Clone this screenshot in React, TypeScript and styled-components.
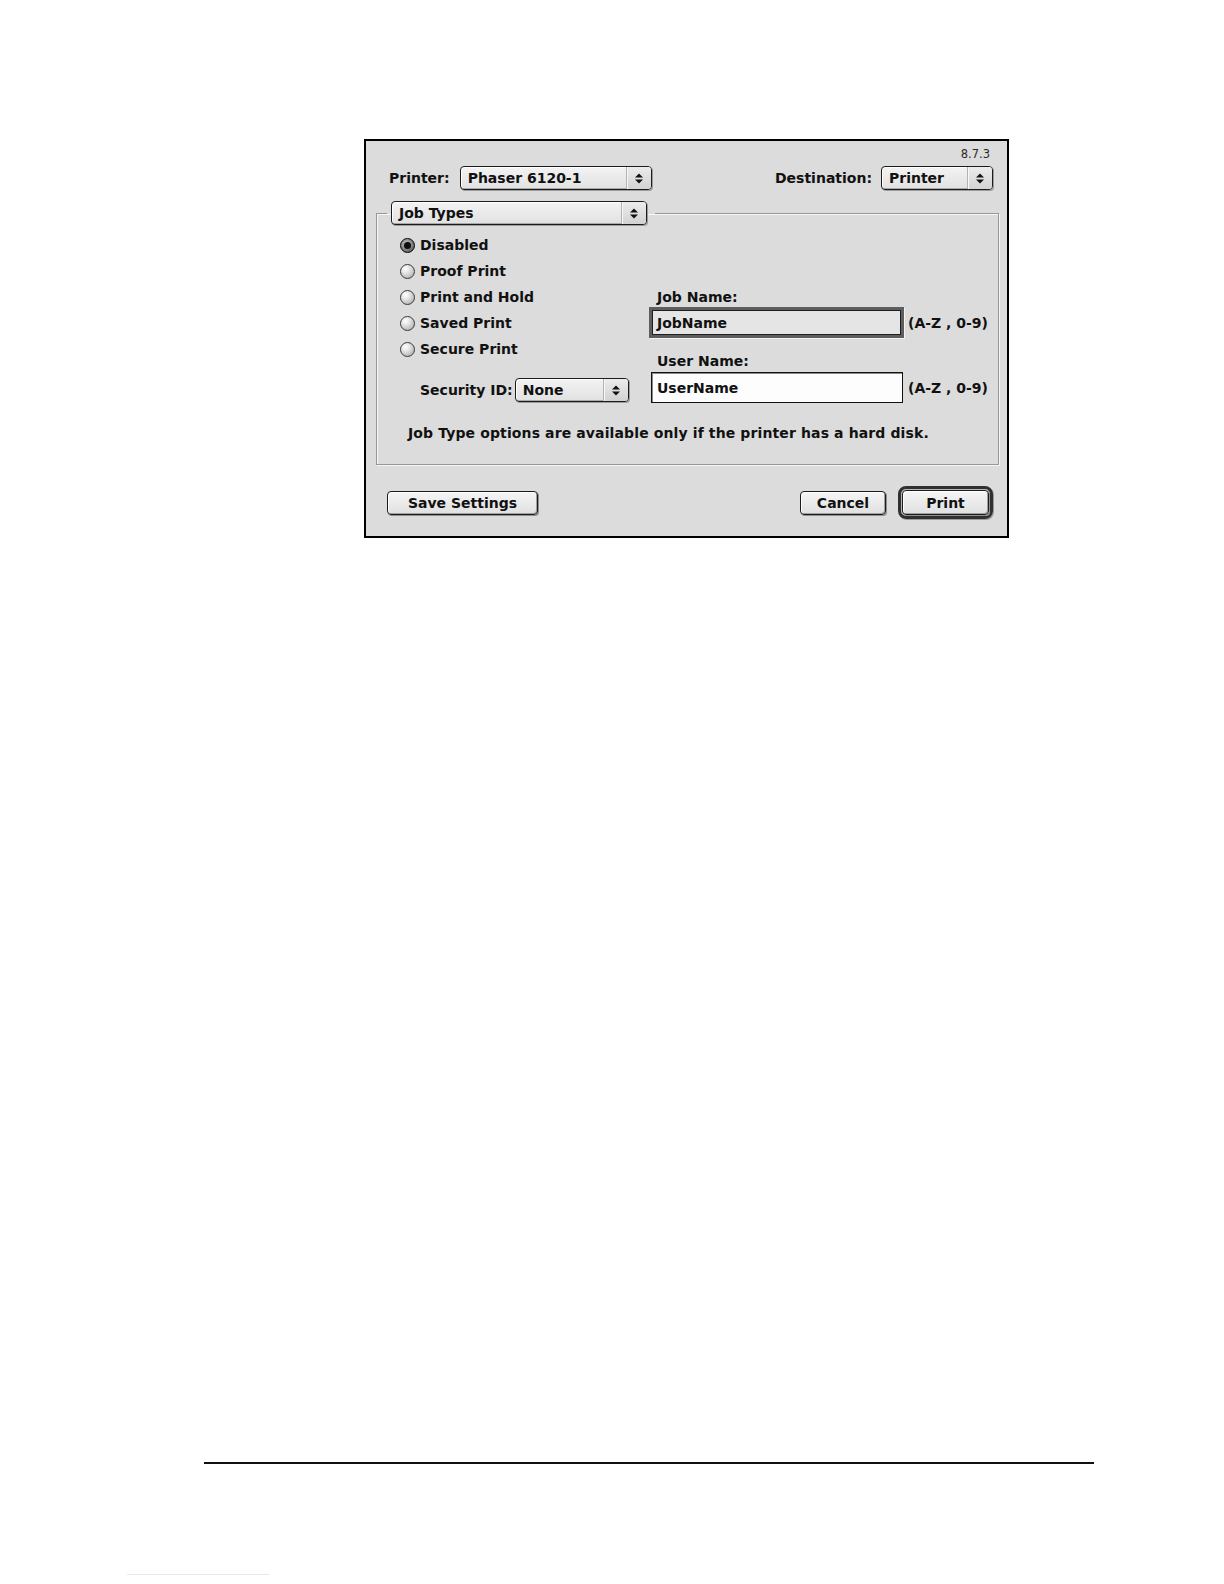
import React from 'react';
import styled, { createGlobalStyle } from 'styled-components';

const Global = createGlobalStyle`
  html, body { margin: 0; padding: 0; background: #ffffff; }
  body { font-family: "DejaVu Sans", "Liberation Sans", sans-serif; }
  * { box-sizing: border-box; }
`;

const Page = styled.div`
  width: 1224px;
  height: 1584px;
  display: flex;
  flex-direction: column;
  background: #ffffff;
  overflow: hidden;
`;

const Dialog = styled.div`
  margin: 139px 0 0 364px;
  width: 645px;
  height: 399px;
  border: 2px solid #000;
  background: #dcdcdc;
  display: flex;
  flex-direction: column;
  font: bold 14px/16px "DejaVu Sans", "Liberation Sans", sans-serif;
  color: #111;
`;

const Version = styled.div`
  margin-top: 7px;
  height: 12px;
  padding-right: 17px;
  text-align: right;
  font: normal 11.5px/12px "DejaVu Sans", sans-serif;
  color: #2a2a2a;
`;

const TopRow = styled.div`
  margin-top: 6px;
  height: 24px;
  padding: 0 14px 0 23px;
  display: flex;
  align-items: center;
  justify-content: space-between;
`;

const Labeled = styled.div<{ $gap: number }>`
  display: flex;
  align-items: center;
  gap: ${(p) => p.$gap}px;
  white-space: nowrap;
`;

const PopupBox = styled.div<{ $w: number }>`
  width: ${(p) => p.$w}px;
  height: 24px;
  border: 1px solid #1c1c1c;
  border-radius: 4px;
  background: linear-gradient(#f3f3f3, #e1e1e1);
  box-shadow: inset 1px 1px 0 #ffffff, inset -1px -1px 0 #a9a9a9, 1px 1px 0 #9c9c9c;
  display: flex;
  align-items: stretch;
`;

const PopupText = styled.span`
  flex: 1;
  padding-left: 7px;
  display: flex;
  align-items: center;
  white-space: nowrap;
`;

const PopupArrows = styled.span`
  width: 25px;
  border-left: 1px solid #b2b2b2;
  box-shadow: inset 1px 0 0 #f8f8f8;
  border-radius: 0 3px 3px 0;
  background: linear-gradient(#ececec, #d2d2d2);
  display: flex;
  align-items: center;
  justify-content: center;
`;

const Arrows = () => (
  <svg width="8" height="11" viewBox="0 0 8 11">
    <path d="M0 4.6 L4 0.4 L8 4.6 Z" fill="#111" />
    <path d="M0 6.4 L8 6.4 L4 10.6 Z" fill="#111" />
  </svg>
);

const Popup = ({ w, children }: { w: number; children: React.ReactNode }) => (
  <PopupBox $w={w}>
    <PopupText>{children}</PopupText>
    <PopupArrows>
      <Arrows />
    </PopupArrows>
  </PopupBox>
);

const Group = styled.fieldset`
  margin: 11px 8px 0 10px;
  padding: 0;
  min-width: 0;
  border: 1px solid #979797;
  box-shadow: 1px 1px 0 #f6f6f6, inset 1px 1px 0 #f6f6f6;
`;

const GroupLegend = styled.legend`
  margin-left: 10px;
  padding: 0 8px 0 4px;
`;

const GroupBody = styled.div`
  padding: 7px 0 23px 23px;
  display: flex;
  flex-direction: column;
`;

const Columns = styled.div`
  display: flex;
`;

const LeftCol = styled.div`
  width: 249px;
  display: flex;
  flex-direction: column;
`;

const RadioRow = styled.div`
  height: 26px;
  display: flex;
  align-items: center;
  gap: 5px;
  white-space: nowrap;
`;

const RadioDot = styled.span<{ $on: boolean }>`
  width: 15px;
  height: 15px;
  border-radius: 50%;
  border: 1px solid ${(p) => (p.$on ? '#000' : '#3a3a3a')};
  background: ${(p) =>
    p.$on
      ? 'radial-gradient(circle at 40% 35%, #bdbdbd 0, #7a7a7a 60%, #3c3c3c 100%)'
      : 'radial-gradient(circle at 35% 30%, #ffffff 0, #e4e4e4 35%, #a0a0a0 100%)'};
  display: flex;
  align-items: center;
  justify-content: center;
`;

const RadioCore = styled.span`
  width: 7px;
  height: 7px;
  border-radius: 50%;
  background: #0c0c0c;
`;

const Radio = ({ on, label }: { on?: boolean; label: string }) => (
  <RadioRow>
    <RadioDot $on={!!on}>{on && <RadioCore />}</RadioDot>
    {label}
  </RadioRow>
);

const SecurityRow = styled(Labeled)`
  margin-top: 16px;
  margin-left: 20px;
`;

const RightCol = styled.div`
  padding-top: 57px;
  display: flex;
  flex-direction: column;
`;

const FieldLabel = styled.div<{ $top: number }>`
  margin: ${(p) => p.$top}px 0 0 8px;
  height: 16px;
`;

const FieldRow = styled.div<{ $top: number }>`
  margin-top: ${(p) => p.$top}px;
  display: flex;
  align-items: center;
  white-space: nowrap;
`;

const Field = styled.div<{ $focused: boolean }>`
  height: 31px;
  width: ${(p) => (p.$focused ? 255 : 252)}px;
  margin-left: ${(p) => (p.$focused ? 0 : 2)}px;
  margin-right: ${(p) => (p.$focused ? 4 : 5)}px;
  border: ${(p) => (p.$focused ? '3px solid #5e5e5e' : '1px solid #111')};
  box-shadow: ${(p) =>
    p.$focused ? 'inset 0 0 0 1px #1e1e1e, 1px 1px 0 #f4f4f4' : 'inset 1px 1px 0 #8a8a8a'};
  background: ${(p) => (p.$focused ? '#e5e5e5' : '#fdfdfd')};
  padding-left: 5px;
  display: flex;
  align-items: center;
`;

const Note = styled.div`
  margin: 22px 0 0 8px;
  height: 16px;
  letter-spacing: 0.12px;
  white-space: nowrap;
`;

const ButtonRow = styled.div`
  margin-top: 21px;
  height: 33px;
  padding: 0 14px 0 21px;
  display: flex;
  align-items: center;
`;

const Button = styled.div<{ $w: number; $h?: number }>`
  width: ${(p) => p.$w}px;
  height: ${(p) => p.$h ?? 24}px;
  border: 1px solid #1c1c1c;
  border-radius: 4px;
  background: linear-gradient(#f5f5f5, #e0e0e0);
  box-shadow: inset 1px 1px 0 #ffffff, inset -1px -1px 0 #a0a0a0, 1px 1px 0 #8e8e8e;
  display: flex;
  align-items: center;
  justify-content: center;
  white-space: nowrap;
`;

const Spacer = styled.div`
  flex: 1;
`;

const CancelWrap = styled.div`
  margin-right: 12px;
`;

const DefaultRing = styled.div`
  width: 95px;
  height: 33px;
  border: 3px solid #303030;
  border-radius: 8px;
  padding: 1px;
  box-shadow: inset 0 0 0 1px #b8b8b8, 1px 1px 0 #9a9a9a;
  display: flex;
`;

const Rule = styled.div`
  margin: 924px 0 0 204px;
  width: 890px;
  height: 2px;
  background: #111;
`;

const FaintRule = styled.div`
  margin: 110px 0 0 127px;
  width: 142px;
  height: 1px;
  background: #e8e8ee;
`;

export default function App() {
  return (
    <Page>
      <Global />
      <Dialog>
        <Version>8.7.3</Version>
        <TopRow>
          <Labeled $gap={10}>
            Printer:
            <Popup w={192}>Phaser 6120-1</Popup>
          </Labeled>
          <Labeled $gap={9}>
            Destination:
            <Popup w={112}>Printer</Popup>
          </Labeled>
        </TopRow>
        <Group>
          <GroupLegend>
            <Popup w={256}>Job Types</Popup>
          </GroupLegend>
          <GroupBody>
            <Columns>
              <LeftCol>
                <Radio on label="Disabled" />
                <Radio label="Proof Print" />
                <Radio label="Print and Hold" />
                <Radio label="Saved Print" />
                <Radio label="Secure Print" />
                <SecurityRow $gap={2}>
                  Security ID:
                  <Popup w={114}>None</Popup>
                </SecurityRow>
              </LeftCol>
              <RightCol>
                <FieldLabel $top={0}>Job Name:</FieldLabel>
                <FieldRow $top={2}>
                  <Field $focused>JobName</Field>
                  (A-Z , 0-9)
                </FieldRow>
                <FieldLabel $top={15}>User Name:</FieldLabel>
                <FieldRow $top={3}>
                  <Field $focused={false}>UserName</Field>
                  (A-Z , 0-9)
                </FieldRow>
              </RightCol>
            </Columns>
            <Note>Job Type options are available only if the printer has a hard disk.</Note>
          </GroupBody>
        </Group>
        <ButtonRow>
          <Button $w={151}>Save Settings</Button>
          <Spacer />
          <CancelWrap>
            <Button $w={86}>Cancel</Button>
          </CancelWrap>
          <DefaultRing>
            <Button $w={87} $h={25}>Print</Button>
          </DefaultRing>
        </ButtonRow>
      </Dialog>
      <Rule />
      <FaintRule />
    </Page>
  );
}
